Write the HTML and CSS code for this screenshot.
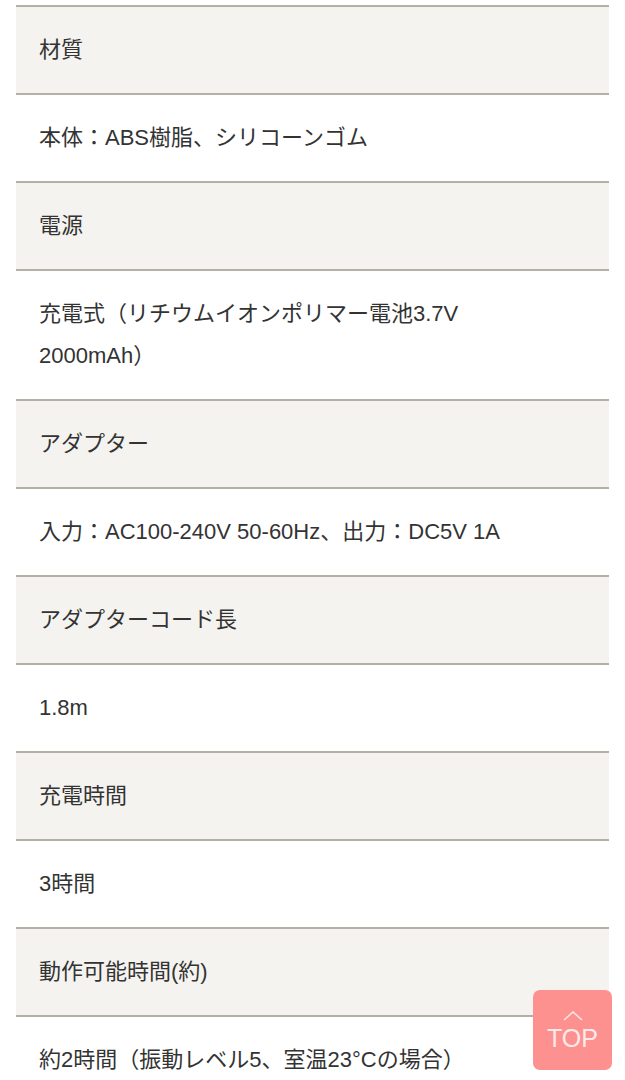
FILE: index.html
```html
<!DOCTYPE html>
<html lang="ja">
<head>
  <meta charset="UTF-8" />
  <meta name="viewport" content="width=device-width, initial-scale=1.0"/>
  <title>仕様</title>
  <link rel="stylesheet" href="styles.css">
</head>
<body>
  <div class="page">
    <table class="spec">
      <tr><th>材質</th></tr>
      <tr><td>本体：ABS樹脂、シリコーンゴム</td></tr>
      <tr><th>電源</th></tr>
      <tr><td>充電式（リチウムイオンポリマー電池3.7V 2000mAh）</td></tr>
      <tr><th>アダプター</th></tr>
      <tr><td>入力：AC100-240V 50-60Hz、出力：DC5V 1A</td></tr>
      <tr><th>アダプターコード長</th></tr>
      <tr><td>1.8m</td></tr>
      <tr><th>充電時間</th></tr>
      <tr><td>3時間</td></tr>
      <tr><th>動作可能時間(約)</th></tr>
      <tr><td>約2時間（振動レベル5、室温23°Cの場合）</td></tr>
    </table>
  </div>

  <!-- ページトップ -->
  <a class="to-top" href="#">
    <svg width="20" height="10" viewBox="0 0 20 10"><path d="M1 9 L10 1 L19 9" fill="none" stroke="#fde6e4" stroke-width="1.6"/></svg>
    <span>TOP</span>
  </a>
</body>
</html>
```

FILE: styles.css
```css
* {
  margin: 0;
  padding: 0;
  box-sizing: border-box;
}

html, body {
  width: 100%;
  height: 100%;
  overflow: hidden;
}

body {
  background: #fff;
  font-family: "Liberation Sans", "Noto Sans CJK JP", sans-serif;
  color: #333;
}

.page {
  padding: 5px 16px 0;
}

.spec {
  width: 100%;
  border-collapse: collapse;
  border-top: 2px solid #b5b0a6;
}

.spec th,
.spec td {
  text-align: left;
  font-weight: normal;
  font-size: 22px;
  line-height: 42px;
  padding: 22px 23px;
  border-bottom: 2px solid #b5b0a6;
}

.spec th {
  background: #f5f3ef;
}

.spec td {
  background: #fff;
  padding-right: 60px;
}

/* TOPボタン */
.to-top {
  position: fixed;
  left: 533px;
  top: 990px;
  width: 79px;
  height: 80px;
  border-radius: 7px;
  background: #fd9190;
  display: flex;
  flex-direction: column;
  align-items: center;
  justify-content: center;
  text-decoration: none;
  color: #fdeae8;
  font-size: 25px;
  padding-top: 2px;
}

.to-top svg {
  margin-bottom: 4px;
}

.to-top span {
  line-height: 26px;
}
```
